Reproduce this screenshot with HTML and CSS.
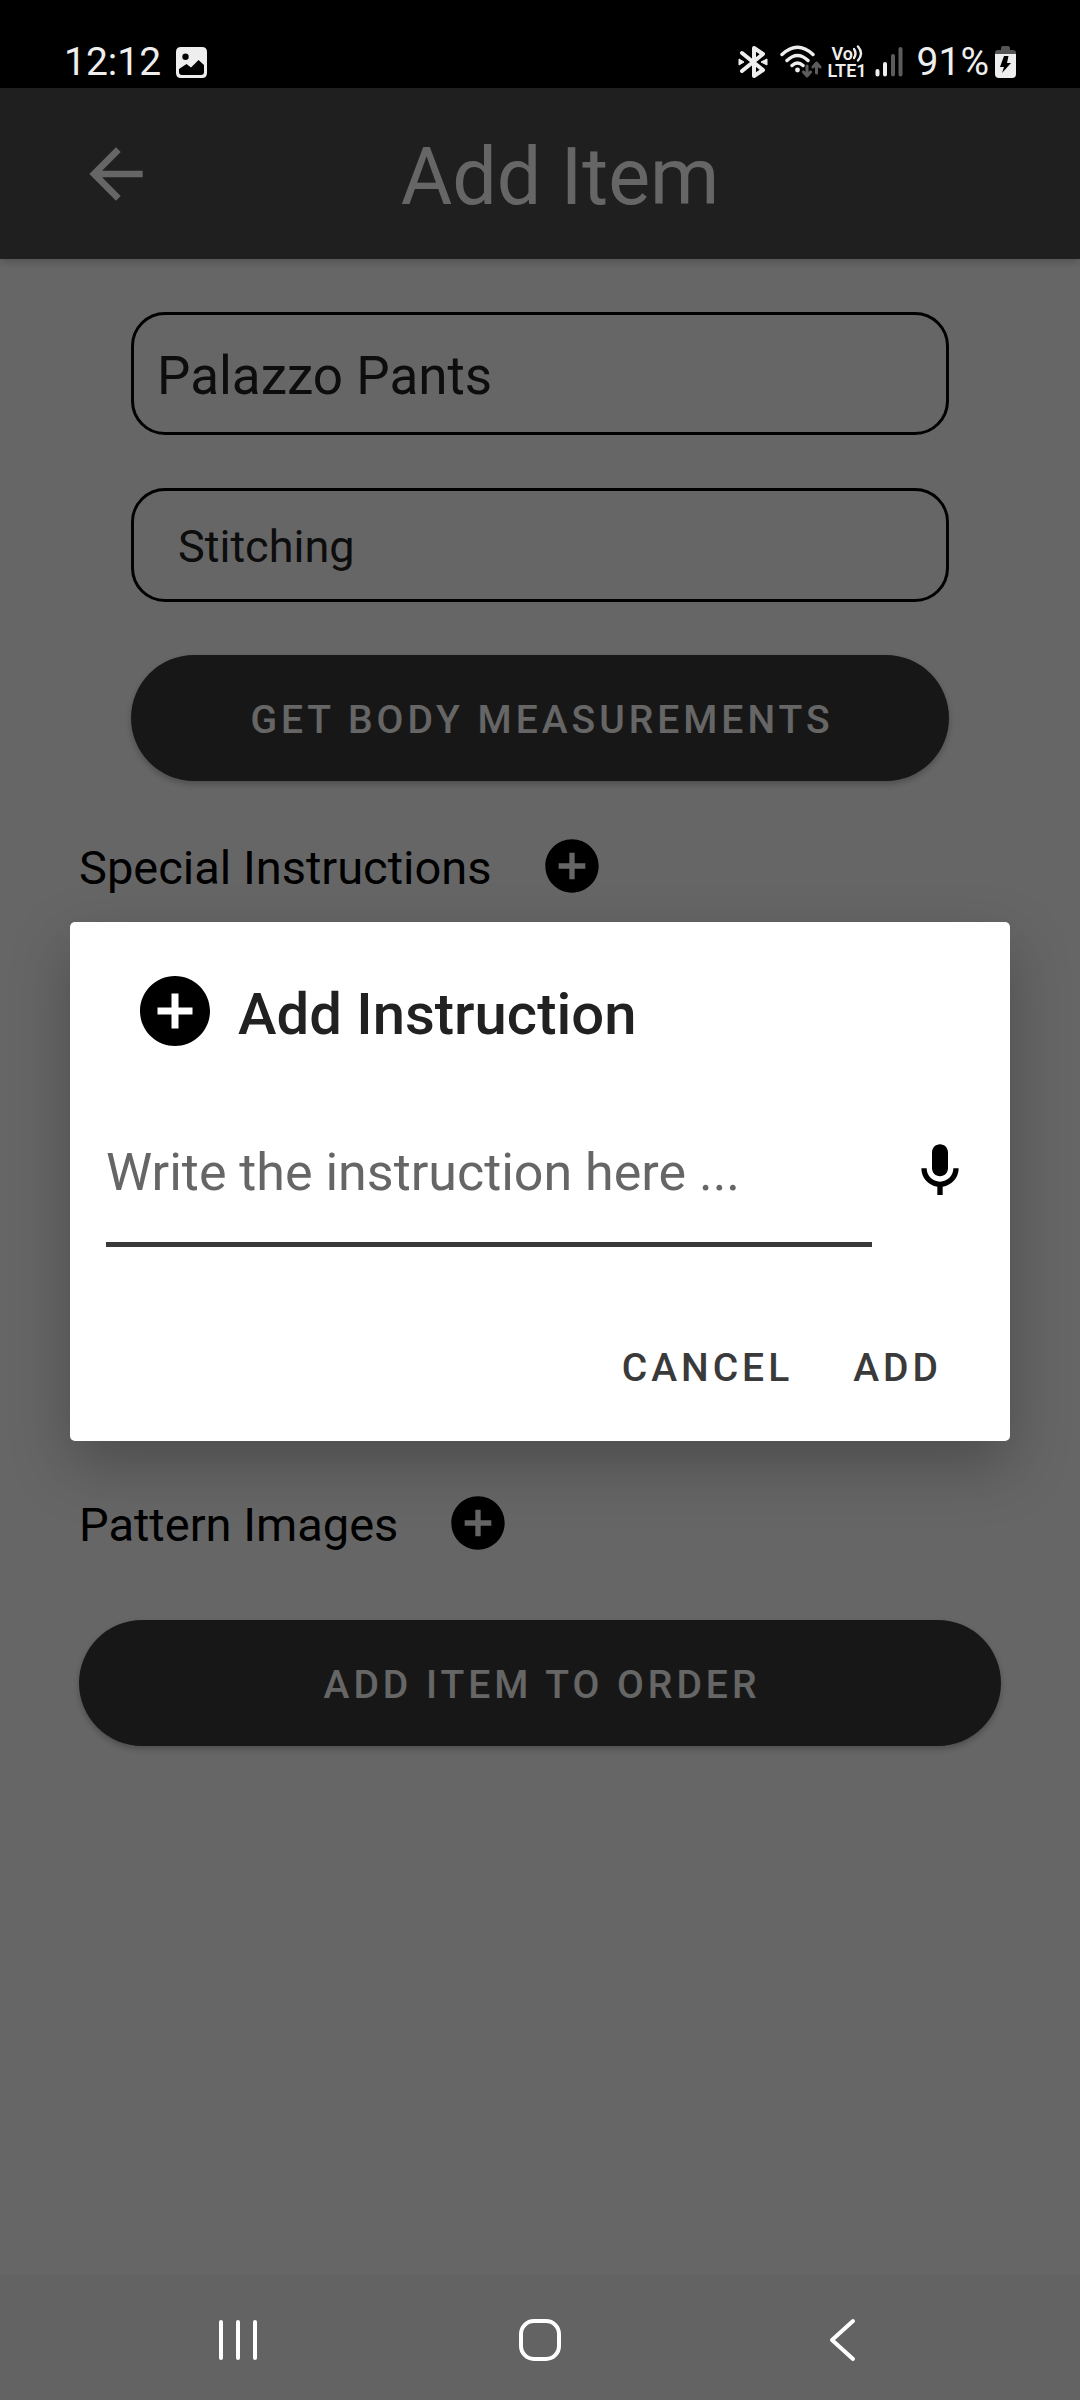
FILE: index.html
```html
<!DOCTYPE html>
<html lang="en">
<head>
<meta charset="utf-8">
<meta name="viewport" content="width=device-width, initial-scale=1">
<title>Add Item</title>
<link rel="stylesheet" href="styles.css">
</head>
<body>
<div class="status-bar">
  <div class="status-group">
    <span class="status-text">12:12</span>
    <svg class="status-icon" width="31" height="31" viewBox="0 0 31 31" aria-hidden="true">
      <path fill-rule="evenodd" d="M5 0H26Q31 0 31 5V26Q31 31 26 31H5Q0 31 0 26V5Q0 0 5 0ZM3 22V25Q3 28 6 28H25Q28 28 28 25V18L22.500 13L15 20.500L10.500 17ZM9.500 6.500A3.200 3.200 0 1 0 9.500 12.900A3.200 3.200 0 1 0 9.500 6.500Z"/>
    </svg>
  </div>
  <div class="status-group status-right">
    <svg width="30" height="34" viewBox="0 0 30 34" aria-hidden="true">
      <path class="line" d="M4 8L25 25L16 31V3L25 9L4 26" stroke-width="4"/>
      <path d="M1 14L6 17L1 20ZM29 14L23 17L29 20Z" stroke="#eee" stroke-width="1"/>
    </svg>
    <svg class="wifi" width="42" height="34" viewBox="0 0 42 34" aria-hidden="true">
      <path class="line" d="M2 9.500Q17.500-5 33 9.500M7 15.500Q17.500 5.500 28 15.500M12 20.500Q17.500 15.500 23 20.500" stroke-width="3.400"/>
      <circle cx="17.500" cy="25" r="2.400"/>
      <path class="line dim" d="M27 21V30M23.500 27L27 31L30.500 27M36.500 28V19M33 22L36.500 18L40 22" stroke-width="3"/>
    </svg>
    <div class="volte">
      <span class="volte-row volte-top">Vo<svg width="10" height="17" viewBox="0 0 10 17" aria-hidden="true"><path class="line" d="M1 4Q4 8.500 1 13M5 1.500Q11 8.500 5 15.500" stroke-width="2.400"/></svg></span>
      <span class="volte-row">LTE1</span>
    </div>
    <svg class="signal" width="28" height="34" viewBox="0 0 28 34" aria-hidden="true">
      <path class="line" d="M2.500 26V29.500M10 19V29.500" stroke-width="4"/>
      <path class="line dim" d="M18 11V29.500M25.500 4V29.500" stroke-width="4"/>
    </svg>
    <span class="status-text">91%</span>
    <svg class="battery" width="21" height="34" viewBox="0 0 21 34" aria-hidden="true">
      <path class="fill-dim" d="M6 3Q6 1 8 1H13Q15 1 15 3V5H18Q21 5 21 8V10H0V8Q0 5 3 5H6Z"/>
      <path fill-rule="evenodd" d="M0 9H21V29Q21 33 17 33H4Q0 33 0 29ZM9 11L5 22H9L7 28L16 18H12L13.500 11Z"/>
    </svg>
  </div>
</div>

<div class="screen">
  <header class="app-bar">
    <button class="icon-button back" type="button" aria-label="Back">
      <svg width="80" height="80" viewBox="0 0 24 24"><path d="M20 11H7.830l5.590-5.590L12 4l-8 8 8 8 1.410-1.410L7.830 13H20v-2z"/></svg>
    </button>
    <h1 class="app-title">Add Item</h1>
  </header>

  <main class="form">
    <div class="fields">
      <input class="field field-name" type="text" value="Palazzo Pants" aria-label="Item name">
      <select class="field field-type" aria-label="Item type"><option>Stitching</option></select>
      <button class="pill" type="button">GET BODY MEASUREMENTS</button>
    </div>
    <section class="block instructions">
      <div class="row">
        <h2 class="label">Special Instructions</h2>
        <button class="icon-button" type="button" aria-label="Add special instruction">
          <svg width="64" height="64" viewBox="0 0 24 24"><path d="M12 2C6.480 2 2 6.480 2 12s4.480 10 10 10 10-4.480 10-10S17.520 2 12 2zm5 11h-4v4h-2v-4H7v-2h4V7h2v4h4v2z"/></svg>
        </button>
      </div>
    </section>
    <section class="block">
      <div class="row">
        <h2 class="label">Pattern Images</h2>
        <button class="icon-button" type="button" aria-label="Add pattern image">
          <svg width="64" height="64" viewBox="0 0 24 24"><path d="M12 2C6.480 2 2 6.480 2 12s4.480 10 10 10 10-4.480 10-10S17.520 2 12 2zm5 11h-4v4h-2v-4H7v-2h4V7h2v4h4v2z"/></svg>
        </button>
      </div>
      <button class="pill" type="button">ADD ITEM TO ORDER</button>
    </section>
  </main>

  <div class="scrim">
    <div class="dialog" role="dialog" aria-modal="true" aria-labelledby="dialog-title">
      <div class="dialog-head">
        <svg width="84" height="84" viewBox="0 0 24 24" aria-hidden="true"><path d="M12 2C6.480 2 2 6.480 2 12s4.480 10 10 10 10-4.480 10-10S17.520 2 12 2zm5 11h-4v4h-2v-4H7v-2h4V7h2v4h4v2z"/></svg>
        <h2 class="dialog-title" id="dialog-title">Add Instruction</h2>
      </div>
      <div class="dialog-entry">
        <input class="entry" type="text" placeholder="Write the instruction here ..." aria-label="Instruction">
        <button class="icon-button" type="button" aria-label="Dictate">
          <svg width="64" height="64" viewBox="0 0 24 24"><path d="M12 14c1.660 0 3-1.340 3-3V5c0-1.660-1.340-3-3-3S9 3.340 9 5v6c0 1.660 1.340 3 3 3zM17 11c0 2.760-2.240 5-5 5s-5-2.240-5-5H5c0 3.530 2.610 6.430 6 6.920V21h2v-3.080c3.390-.49 6-3.390 6-6.920h-2z"/></svg>
        </button>
      </div>
      <div class="dialog-actions">
        <button class="text-button" type="button">CANCEL</button>
        <button class="text-button" type="button">ADD</button>
      </div>
    </div>
  </div>
</div>

<nav class="nav-bar" aria-label="System">
  <button class="icon-button nav-button" type="button" aria-label="Recents">
    <svg width="48" height="48" viewBox="0 0 48 48"><path class="nav-line" d="M7 6V42M24 6V42M41 6V42"/></svg>
  </button>
  <button class="icon-button nav-button" type="button" aria-label="Home">
    <svg width="48" height="48" viewBox="0 0 48 48"><rect class="nav-line" x="5" y="5" width="38" height="38" rx="13"/></svg>
  </button>
  <button class="icon-button nav-button" type="button" aria-label="Back">
    <svg width="48" height="48" viewBox="0 0 48 48"><path class="nav-line" d="M35 5L14 24L35 43"/></svg>
  </button>
</nav>
</body>
</html>
```
FILE: styles.css
```css
* {
  box-sizing: border-box;
}

body {
  margin: 0;
  min-height: 100vh;
  display: flex;
  flex-direction: column;
  background: #fff;
  color: #000;
  font-family: Roboto, "Noto Sans", sans-serif;
}

button,
input,
select {
  font: inherit;
  color: inherit;
  border: 0;
  margin: 0;
  padding: 0;
  background: none;
}

h1,
h2 {
  margin: 0;
  font-weight: 400;
}

svg {
  display: block;
  flex: none;
}

/* System status bar */
.status-bar {
  height: 88px;
  padding: 37px 64px 0 64px;
  display: flex;
  align-items: flex-start;
  justify-content: space-between;
  background: #000;
  color: #eee;
  fill: #eee;
}

.status-group {
  height: 50px;
  display: flex;
  align-items: center;
}

.status-text {
  font-size: 39px;
  line-height: 50px;
}

.status-icon {
  margin-left: 15px;
}

.line {
  fill: none;
  stroke: #eee;
  stroke-linecap: round;
  stroke-linejoin: round;
}

.dim {
  stroke: #5c5c5c;
}

.fill-dim {
  fill: #555;
}

.wifi {
  margin-left: 12px;
}

.volte {
  margin-left: 5px;
  font-size: 18px;
  line-height: 17px;
  font-weight: 600;
}

.volte-row {
  display: flex;
}

.volte-top {
  padding-left: 4px;
}

.signal {
  margin: 0 14px 0 8px;
}

.battery {
  margin-left: 6px;
}

/* App screen */
.screen {
  flex: 1;
  position: relative;
  display: flex;
  flex-direction: column;
}

.app-bar {
  height: 171px;
  padding: 0 76px;
  display: grid;
  grid-template-columns: 80px 1fr 40px;
  align-items: center;
  background: #4e4e4e;
  color: #fff;
  box-shadow: 0 3px 8px rgba(0, 0, 0, 0.2);
}

.app-title {
  padding-top: 6px;
  font-size: 79px;
  line-height: 92px;
  text-align: center;
}

.icon-button {
  display: flex;
  fill: currentColor;
}

.form {
  padding: 53px 79px;
  display: flex;
  flex-direction: column;
}

.fields {
  padding: 0 52px;
  display: flex;
  flex-direction: column;
  gap: 53px;
}

.field {
  width: 100%;
  border: 3px solid #000;
  border-radius: 34px;
  color: #222;
  appearance: none;
}

.field-name {
  height: 123px;
  padding: 4px 23px 0;
  font-size: 53px;
}

.field-type {
  height: 114px;
  padding: 3px 44px 0;
  font-size: 45px;
}

.pill {
  width: 100%;
  height: 126px;
  padding: 4px 0 0 4px;
  border-radius: 63px;
  background: #3a3a3a;
  color: #fff;
  font-size: 39px;
  font-weight: 500;
  letter-spacing: 4px;
  box-shadow: 0 3px 6px rgba(0, 0, 0, 0.25);
}

.block {
  padding-top: 52px;
}

.instructions {
  min-height: 657px;
}

.row {
  height: 66px;
  margin-bottom: 64px;
  display: flex;
  align-items: center;
  gap: 48px;
}

.block .pill {
  display: block;
}

.label {
  padding-top: 3px;
  font-size: 47px;
  line-height: 64px;
}

/* Dialog */
.scrim {
  position: absolute;
  inset: 0;
  padding: 0 70px;
  display: flex;
  align-items: center;
  background: rgba(0, 0, 0, 0.6);
}

.dialog {
  flex: 1;
  padding: 47px 36px 22px;
  border-radius: 5px;
  background: #fff;
  box-shadow: 0 24px 60px rgba(0, 0, 0, 0.25);
}

.dialog-head {
  padding-left: 27px;
  display: flex;
  align-items: center;
  gap: 21px;
}

.dialog-title {
  padding-top: 6px;
  color: #212121;
  font-size: 58px;
  line-height: 78px;
  font-weight: 500;
}

.dialog-entry {
  margin-top: 42px;
  display: flex;
  align-items: center;
  gap: 36px;
  padding-right: 2px;
}

.entry {
  flex: 1;
  min-width: 0;
  height: 152px;
  padding-top: 8px;
  border-bottom: 5px solid #3a3a3a;
  color: #222;
  font-size: 52px;
  outline: none;
}

.entry::placeholder {
  color: #666;
  opacity: 1;
}

.dialog-actions {
  margin-top: 71px;
  padding-right: 10px;
  display: flex;
  justify-content: flex-end;
  gap: 16px;
}

.text-button {
  height: 101px;
  padding: 0 22px;
  color: #3a3a3a;
  font-size: 39px;
  font-weight: 500;
  letter-spacing: 4px;
}

/* System navigation bar */
.nav-bar {
  height: 126px;
  padding: 5px 87px 0;
  display: grid;
  grid-template-columns: repeat(3, 1fr);
  align-items: center;
  justify-items: center;
  background: #636363;
  color: #fff;
}

.nav-button {
  padding: 6px;
}

.nav-line {
  fill: none;
  stroke: #fff;
  stroke-width: 4;
  stroke-linecap: round;
  stroke-linejoin: round;
}
```
